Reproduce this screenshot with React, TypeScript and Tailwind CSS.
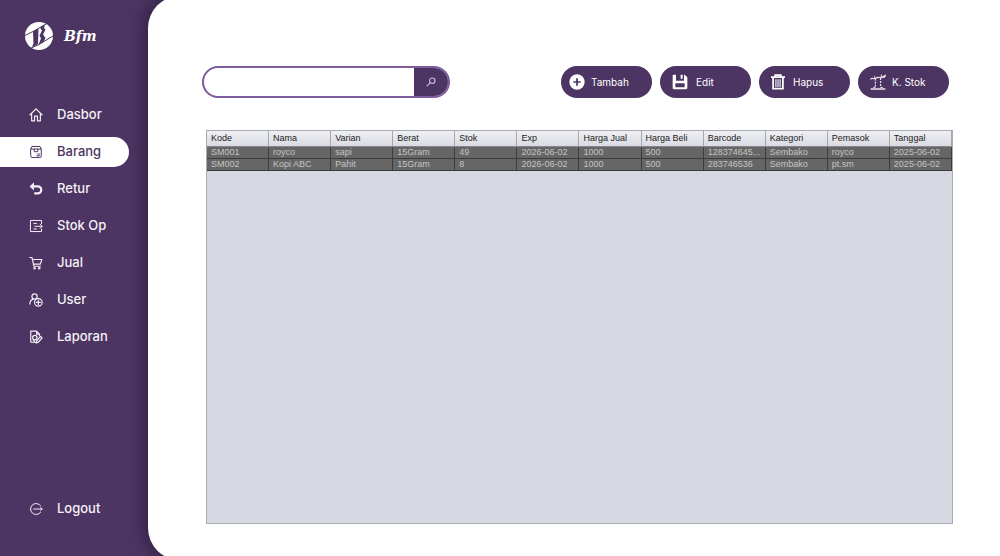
import React, { useState } from 'react';

type IconProps = { className?: string };

const stroke = {
    viewBox: '0 0 24 24',
    fill: 'none',
    stroke: 'currentColor',
    strokeWidth: 1.7,
    strokeLinecap: 'round',
    strokeLinejoin: 'round',
    'aria-hidden': true,
} as const;

const HomeIcon: React.FC<IconProps> = ({ className }) => (
    <svg {...stroke} strokeWidth={2} className={className}>
        <path d="M1.500 12 12 1.500 22.500 12M4.500 10v12h5v-8h5v8h5V10" />
    </svg>
);

const BoxIcon: React.FC<IconProps> = ({ className }) => (
    <svg {...stroke} className={className}>
        <path d="M3 7 5 2.500h14L21 7v12a2.500 2.500 0 0 1-2.500 2.500h-13A2.500 2.500 0 0 1 3 19ZM3 7h18M9 7v4.500h6V7M15 15.500h3M13.500 18.500H18" />
    </svg>
);

const ReturnIcon: React.FC<IconProps> = ({ className }) => (
    <svg {...stroke} strokeWidth={3.8} strokeLinecap="butt" strokeLinejoin="miter" className={className}>
        <path d="M6 7.500h9a6 6 0 0 1 0 12H9" />
        <path d="M8.500.5v14L1 7.500Z" fill="currentColor" stroke="none" />
    </svg>
);

const StockIcon: React.FC<IconProps> = ({ className }) => (
    <svg {...stroke} className={className}>
        <path d="M21.500 8V2.500h-19v19h19V17M8 7.500h5M8 17h5M10 12.500h12.500M19 9l3.500 3.500L19 16" />
    </svg>
);

const CartIcon: React.FC<IconProps> = ({ className }) => (
    <svg {...stroke} strokeWidth={2} className={className}>
        <path d="M1.500 2.500h3.500l3.500 15h11M5.500 6H22l-2.500 8H7.500" />
        <circle cx="9.500" cy="21" r="1.300" />
        <circle cx="17.500" cy="21" r="1.300" />
    </svg>
);

const UserIcon: React.FC<IconProps> = ({ className }) => (
    <svg {...stroke} strokeWidth={2} className={className}>
        <circle cx="9.500" cy="6" r="4.500" />
        <path d="M1.500 19c0-4.500 2-7.500 6-8.500" />
        <circle cx="16" cy="16" r="6.500" />
        <path d="M16 12.500v7M12.500 16h7" />
    </svg>
);

const ReportIcon: React.FC<IconProps> = ({ className }) => (
    <svg {...stroke} strokeWidth={2} className={className}>
        <path d="M9 21H3V2h10l5 5v3M13 2v5h5" />
        <circle cx="10" cy="13" r="3.800" />
        <path d="m12.500 22 1-4 6.500-7 2.500 2.500-6.500 7.500ZM7 17l4 4.500" />
    </svg>
);

const LogoutIcon: React.FC<IconProps> = ({ className }) => (
    <svg {...stroke} className={className}>
        <path d="M20 6.500a9.500 9.500 0 1 0 0 11M8 12h14.500M20 9.500l2.500 2.500-2.500 2.500" />
    </svg>
);

const SearchIcon: React.FC<IconProps> = ({ className }) => (
    <svg {...stroke} strokeWidth={2.6} className={className}>
        <circle cx="15" cy="9" r="6.500" />
        <path d="m10.500 13.500-8 8" />
    </svg>
);

const PlusIcon: React.FC<IconProps> = ({ className }) => (
    <svg viewBox="0 0 24 24" className={className} aria-hidden>
        <circle cx="12" cy="12" r="11.500" fill="currentColor" />
        <path d="M12 6.500v11M6.500 12h11" stroke="#4c3562" strokeWidth="2.600" />
    </svg>
);

const SaveIcon: React.FC<IconProps> = ({ className }) => (
    <svg viewBox="0 0 24 24" className={className} fill="currentColor" fillRule="evenodd" aria-hidden>
        <path d="M2 1h4v9h12V1h1l4 4v16a2 2 0 0 1-2 2H3a2 2 0 0 1-2-2V2a1 1 0 0 1 1-1ZM5 14v6h14v-6ZM13 1h3v6h-3Z" />
    </svg>
);

const TrashIcon: React.FC<IconProps> = ({ className }) => (
    <svg viewBox="0 0 20 22" className={className} fill="none" stroke="currentColor" strokeWidth="2.500" aria-hidden>
        <path d="M0 4h20M6 3.500V1.300h8v2.200M3 4v16.500h14V4" />
        <path d="M7 7v11M10 7v11M13 7v11" strokeWidth="1.600" />
    </svg>
);

const ScaleIcon: React.FC<IconProps> = ({ className }) => (
    <svg viewBox="0 0 24 24" className={className} fill="none" stroke="currentColor" strokeWidth="1.500" aria-hidden>
        <path d="M1 22.500h22" strokeWidth="2" />
        <path d="M8 7v13M16 6v14" strokeDasharray="3 1.500" />
        <path d="M0 8.500 2 6l5 .5 4-2 5 .5 5-2.500 3-1.500-1.500 4-6.500 1-4-.5-5 2-4-.5Z" fill="currentColor" strokeWidth=".5" />
        <path d="M5 20h3M16 20h3M7 3.500v2M17 1v3" />
    </svg>
);

const Logo: React.FC<IconProps> = ({ className }) => (
    <svg viewBox="0 0 28 28" className={className} aria-hidden>
        <circle cx="14" cy="14" r="14" fill="#fff" />
        <path d="m0 13.500 8-4 14-8M5 26.500l9-4 14-8.500" fill="none" stroke="#4c3562" strokeWidth="1" />
        <g fill="#4c3562">
            <path d="m8 9.500 5.500-3-.5 15.500-6 3.500 1.500-4Z" />
            <path d="m15 5.500 5-3-1 3.500 1.500 1.500-2.500 5 2.500 3.500-2 4-5 2.500 2.500-6-1.500-3 2.500-5Z" />
        </g>
    </svg>
);

const menu = [
    { label: 'Dasbor', Icon: HomeIcon },
    { label: 'Barang', Icon: BoxIcon },
    { label: 'Retur', Icon: ReturnIcon },
    { label: 'Stok Op', Icon: StockIcon },
    { label: 'Jual', Icon: CartIcon },
    { label: 'User', Icon: UserIcon },
    { label: 'Laporan', Icon: ReportIcon },
];

const actions = [
    { label: 'Tambah', Icon: PlusIcon, spacing: 'pl-2 gap-1.5', size: 'size-4' },
    { label: 'Edit', Icon: SaveIcon, spacing: 'pl-3 gap-2', size: 'size-4' },
    { label: 'Hapus', Icon: TrashIcon, spacing: 'pl-3 gap-2', size: 'h-4 w-3.5' },
    { label: 'K. Stok', Icon: ScaleIcon, spacing: 'pl-3 gap-1.5', size: 'size-4' },
];

const columns = [
    'Kode', 'Nama', 'Varian', 'Berat', 'Stok', 'Exp',
    'Harga Jual', 'Harga Beli', 'Barcode', 'Kategori', 'Pemasok', 'Tanggal',
];

const rows = [
    ['SM001', 'royco', 'sapi', '15Gram', '49', '2026-06-02', '1000', '500', '128374645...', 'Sembako', 'royco', '2025-06-02'],
    ['SM002', 'Kopi ABC', 'Pahit', '15Gram', '8', '2026-06-02', '1000', '500', '283746536', 'Sembako', 'pt.sm', '2025-06-02'],
];

interface NavButtonProps {
    label: string;
    Icon: React.FC<IconProps>;
    active?: boolean;
    onClick?: () => void;
}

const NavButton: React.FC<NavButtonProps> = ({ label, Icon, active, onClick }) => (
    <button
        type="button"
        onClick={onClick}
        aria-current={active ? 'page' : undefined}
        className={`flex h-[30px] w-full items-center gap-3.5 rounded-r-full pl-[29px] text-[13px] font-medium ${
            active ? 'bg-white text-[#4c3562]' : 'text-[#f4f0f7]'
        }`}
    >
        <Icon className="size-3.5 shrink-0" />
        {label}
    </button>
);

export default function App() {
    const [page, setPage] = useState('Barang');
    const [query, setQuery] = useState('');

    return (
        <div className="flex h-screen overflow-hidden bg-[#4c3562] font-['Inter',sans-serif]">
            {/* Sidebar */}
            <aside className="flex w-[148px] shrink-0 flex-col pt-[22px] pr-[19px] pb-8">
                <div className="flex items-center gap-[11px] pl-[25px] text-white">
                    <Logo className="size-7" />
                    <span className="font-['DejaVu_Serif',serif] text-sm font-bold italic">Bfm</span>
                </div>
                <nav className="mt-[50px] flex flex-col gap-[7px]">
                    {menu.map((item) => (
                        <NavButton
                            key={item.label}
                            {...item}
                            active={page === item.label}
                            onClick={() => setPage(item.label)}
                        />
                    ))}
                </nav>
                <div className="mt-auto">
                    <NavButton label="Logout" Icon={LogoutIcon} />
                </div>
            </aside>

            {/* Content */}
            <main className="-my-1 flex min-w-0 flex-1 flex-col gap-8 rounded-l-[32px] bg-white pt-[70px] pr-[47px] pb-9 pl-[54px] shadow-[-2px_0_14px_3px_rgba(30,15,45,0.5)]">
                <div className="mr-1 flex items-center justify-between">
                    <form
                        onSubmit={(e) => e.preventDefault()}
                        className="flex h-8 w-[248px] overflow-hidden rounded-full border-2 border-[#7c5c9c]"
                    >
                        <input
                            type="text"
                            aria-label="Cari barang"
                            value={query}
                            onChange={(e) => setQuery(e.target.value)}
                            className="min-w-0 flex-1 px-4 text-xs text-[#4c3562] outline-none"
                        />
                        <button
                            type="submit"
                            aria-label="Cari"
                            className="flex w-[34px] items-center justify-center bg-[#4c3562] text-[#cfc2dc]"
                        >
                            <SearchIcon className="size-2.5" />
                        </button>
                    </form>
                    <div className="flex gap-2">
                        {actions.map(({ label, Icon, spacing, size }) => (
                            <button
                                key={label}
                                type="button"
                                className={`flex h-8 w-[91px] items-center rounded-full bg-[#4c3562] text-[10px] text-white ${spacing}`}
                            >
                                <Icon className={`${size} shrink-0`} />
                                {label}
                            </button>
                        ))}
                    </div>
                </div>

                <div className="ml-1 flex-1 border border-[#a9abb3] bg-[#d6d9e2]">
                    <table className="w-full table-fixed border-separate border-spacing-0 font-['Liberation_Sans',sans-serif] text-[9px]">
                        <thead>
                            <tr className="h-4">
                                {columns.map((name) => (
                                    <th
                                        key={name}
                                        className="border-r border-b border-r-[#a4a6b0] border-b-[#85868c] bg-linear-to-b from-[#eff0f3] to-[#d9dbe2] p-0 pl-1 text-left leading-[15px] font-normal text-[#222]"
                                    >
                                        {name}
                                    </th>
                                ))}
                            </tr>
                        </thead>
                        <tbody>
                            {rows.map((row) => (
                                <tr key={row[0]}>
                                    {row.map((cell, i) => (
                                        <td
                                            key={columns[i]}
                                            className="truncate border-r border-b border-[#3c3c3c] bg-[#666] p-0 pl-1 leading-[11px] text-[#c4c4c4]"
                                        >
                                            {cell}
                                        </td>
                                    ))}
                                </tr>
                            ))}
                        </tbody>
                    </table>
                </div>
            </main>
        </div>
    );
}
